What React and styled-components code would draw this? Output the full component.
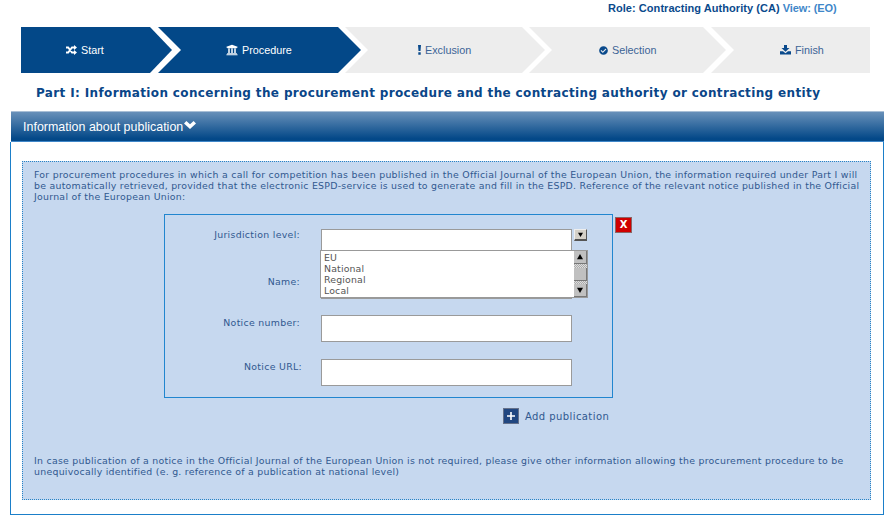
import React from "react";
import styled, { createGlobalStyle } from "styled-components";
import { FaUniversity, FaCheckCircle } from "react-icons/fa";

const Global = createGlobalStyle`
  * { box-sizing: border-box; }
  body { margin: 0; background: #fff; }
`;
const Page = styled.main`
  width: 889px;
  height: 518px;
  overflow: hidden;
  font-family: "DejaVu Sans", sans-serif;
  color: #31588f;
`;
const RoleBar = styled.header`
  height: 27px;
  padding-left: 608px;
  font: bold 11px/16px "Liberation Sans", sans-serif;
  letter-spacing: 0.05px;
  color: #0a4a8c;
  white-space: nowrap;
`;
const ViewLink = styled.a`
  color: #3f87c9;
  letter-spacing: -0.1px;
`;
const Steps = styled.nav`
  display: flex;
  height: 46px;
  padding-left: 21px;
`;
const shapes = {
  first: "polygon(0 0, calc(100% - 22px) 0, 100% 50%, calc(100% - 22px) 100%, 0 100%)",
  middle: "polygon(0 0, calc(100% - 23px) 0, 100% 50%, calc(100% - 23px) 100%, 0 100%, 23px 50%)",
  last: "polygon(0 0, 100% 0, 100% 100%, 0 100%, 23px 50%)",
};
const Step = styled.div`
  display: flex;
  align-items: center;
  flex: none;
  width: ${(p) => p.$w}px;
  margin-left: ${(p) => -p.$overlap}px;
  padding-left: ${(p) => p.$pad}px;
  gap: 4px;
  clip-path: ${(p) => shapes[p.$shape]};
  background: ${(p) => (p.$active ? "#034888" : "#ededed")};
  color: ${(p) => (p.$active ? "#fff" : "#3c6496")};
  font: 10.8px/14px "Liberation Sans", sans-serif;
  svg { color: ${(p) => (p.$active ? "#fff" : "#0a4a8c")}; flex: none; }
`;
const Title = styled.h1`
  margin: 0;
  height: 38px;
  padding: 12px 0 0 36px;
  font: bold 12px/16px "DejaVu Sans", sans-serif;
  letter-spacing: 0.36px;
  color: #0a4688;
  white-space: nowrap;
`;
const PanelHeader = styled.h2`
  display: flex;
  align-items: center;
  margin: 0 0 0 11px;
  width: 873px;
  height: 31px;
  padding-left: 12px;
  border-top: 1px solid #a9bfd6;
  border-bottom: 1px solid #3f87c9;
  background: linear-gradient(#6890b9, #034888 92%);
  color: #fff;
  font: 12.4px/16px "Liberation Sans", sans-serif;
  letter-spacing: 0.04px;
  gap: 1px;
  svg { margin-top: -3px; }
`;
const Panel = styled.section`
  margin-left: 10px;
  width: 874px;
  height: 373px;
  padding: 19px 12px 14px 11px;
  border: 1px solid #1b7fc9;
  border-top: 0;
`;
const Notice = styled.div`
  display: flex;
  flex-direction: column;
  width: 849px;
  height: 339px;
  padding: 7px 0 0 11px;
  border: 1px dotted #2683c6;
  background: #c6d8ef;
`;
const Line = styled.div`
  font-size: 9.4px;
  line-height: 11px;
  letter-spacing: ${(p) => p.$ls || 0.26}px;
  white-space: nowrap;
`;
const PublicationRow = styled.div`
  display: flex;
  align-items: flex-start;
  margin: 12px 0 0 130px;
  gap: 2px;
`;
const Publication = styled.div`
  width: 449px;
  height: 184px;
  padding-top: 14px;
  border: 1px solid #2186cf;
`;
const Field = styled.div`
  position: relative;
  display: flex;
  height: ${(p) => p.$h}px;
`;
const Label = styled.label`
  width: ${(p) => p.$w || 135}px;
  margin-right: ${(p) => 156 - (p.$w || 135)}px;
  padding-top: ${(p) => p.$top}px;
  text-align: right;
  font-size: 9.4px;
  line-height: 12px;
  letter-spacing: 0.3px;
`;
const Input = styled.input`
  width: 251px;
  height: 27px;
  border: 1px solid #9a9a9a;
  border-radius: 0;
  background: #fff;
  padding: 0 3px;
`;
const Toggle = styled.button`
  width: 13px;
  height: 12px;
  margin-left: 2px;
  padding: 0;
  display: grid;
  place-items: center;
  border: solid;
  border-color: #eee #555 #555 #eee;
  border-width: 1px 1px 2px 1px;
  background: #d4d0c8;
`;
const Options = styled.div`
  position: absolute;
  z-index: 1;
  left: 155px;
  top: 21px;
  width: 268px;
  height: 48px;
  display: flex;
  justify-content: space-between;
  border: 1px solid #999;
  background: #fff;
`;
const OptionList = styled.ul`
  margin: 0;
  padding: 1px 0 0 3px;
  list-style: none;
  color: #555;
  font-size: 9.4px;
  line-height: 11px;
  letter-spacing: 0.15px;
`;
const Scroll = styled.div`
  width: 13px;
  display: flex;
  flex-direction: column;
  justify-content: space-between;
  background: repeating-conic-gradient(#aaa 0 25%, #ddd 0 50%) 0 0 / 2px 2px;
`;
const ScrollPart = styled.div`
  height: 13px;
  display: grid;
  place-items: center;
  background: #c0c0c0;
  border: solid;
  border-width: 0 1px 1px 0;
  border-color: #777;
`;
const Remove = styled.button`
  width: 17px;
  height: 16px;
  margin-top: 3px;
  padding: 0;
  border: 1px solid #8a6666;
  background: #d00000;
  color: #fff;
  font: bold 10px/12px "DejaVu Sans", sans-serif;
`;
const Add = styled.div`
  display: flex;
  align-items: center;
  height: 16px;
  margin: 10px 0 0 469px;
  gap: 6px;
  font-size: 10px;
  letter-spacing: 0.42px;
`;
const Plus = styled.span`
  display: grid;
  place-items: center;
  width: 16px;
  height: 16px;
  border: 1px solid #65718a;
  background: #204680;
`;
const Closing = styled.div`margin-top: 31px;`;

const Arrow = ({ up, size = 6 }) => (
  <svg width={size} height={size} viewBox="0 0 8 8"><path d={up ? "M0 7L4 0L8 7Z" : "M0 1L4 8L8 1Z"} fill="#000" /></svg>
);
const Shuffle = () => (
  <svg width="11" height="10" viewBox="0 0 11 10" fill="none" stroke="currentColor" strokeWidth="1.8">
    <path d="M0 2.5H2.2L6 7.5H8.5M0 7.5H2.2L6 2.5H8.5" />
    <path d="M8 0L11 2.5L8 5ZM8 5L11 7.5L8 10Z" fill="currentColor" stroke="none" />
  </svg>
);
const Exclamation = () => (
  <svg width="3" height="10" viewBox="0 0 3 10" fill="currentColor">
    <path d="M0 0H3L2.5 6H.5ZM.3 7.3H2.7V9.7H.3Z" />
  </svg>
);
const Download = () => (
  <svg width="11" height="10" viewBox="0 0 11 10" fill="currentColor">
    <path d="M4 0H7V3H9.5L5.5 6.8L1.5 3H4ZM0 6.3H3L5.5 8.2L8 6.3H11V9.6H0Z" />
  </svg>
);
const Chevron = () => (
  <svg width="12" height="8" viewBox="0 0 12 8" fill="currentColor">
    <path d="M0 2.4L2.4 0L6 3.3L9.6 0L12 2.4L6 8Z" />
  </svg>
);

export default function App() {
  return (
    <Page>
      <Global />
      <RoleBar>Role: Contracting Authority (CA) <ViewLink>View: (EO)</ViewLink></RoleBar>
      <Steps>
        <Step $w={151} $overlap={0} $pad={45} $shape="first" $active><Shuffle />Start</Step>
        <Step $w={203} $overlap={14} $pad={68} $shape="middle" $active><FaUniversity size={12} />Procedure</Step>
        <Step $w={200} $overlap={16} $pad={73} $shape="middle"><Exclamation />Exclusion</Step>
        <Step $w={197} $overlap={16} $pad={70} $shape="middle"><FaCheckCircle size={9} />Selection</Step>
        <Step $w={159} $overlap={15} $pad={69} $shape="last"><Download />Finish</Step>
      </Steps>
      <Title>Part I: Information concerning the procurement procedure and the contracting authority or contracting entity</Title>
      <PanelHeader>Information about publication<Chevron /></PanelHeader>
      <Panel>
        <Notice>
          <Line $ls={0.27}>For procurement procedures in which a call for competition has been published in the Official Journal of the European Union, the information required under Part I will</Line>
          <Line $ls={0.25}>be automatically retrieved, provided that the electronic ESPD-service is used to generate and fill in the ESPD. Reference of the relevant notice published in the Official</Line>
          <Line>Journal of the European Union:</Line>
          <PublicationRow>
            <Publication>
              <Field $h={43}>
                <Label $top={0}>Jurisdiction level:</Label>
                <Input />
                <Toggle><Arrow size={5} /></Toggle>
                <Options>
                  <OptionList><li>EU</li><li>National</li><li>Regional</li><li>Local</li></OptionList>
                  <Scroll><ScrollPart><Arrow up /></ScrollPart><ScrollPart /><ScrollPart><Arrow /></ScrollPart></Scroll>
                </Options>
              </Field>
              <Field $h={43}><Label $top={4}>Name:</Label><Input /></Field>
              <Field $h={44}><Label $top={2}>Notice number:</Label><Input /></Field>
              <Field $h={30}><Label $top={2} $w={137}>Notice URL:</Label><Input /></Field>
            </Publication>
            <Remove>X</Remove>
          </PublicationRow>
          <Add><Plus><svg width="8" height="8" viewBox="0 0 8 8"><path d="M0 4H8M4 0V8" stroke="#fff" strokeWidth="1.6" /></svg></Plus>Add publication</Add>
          <Closing>
            <Line>In case publication of a notice in the Official Journal of the European Union is not required, please give other information allowing the procurement procedure to be</Line>
            <Line>unequivocally identified (e. g. reference of a publication at national level)</Line>
          </Closing>
        </Notice>
      </Panel>
    </Page>
  );
}
